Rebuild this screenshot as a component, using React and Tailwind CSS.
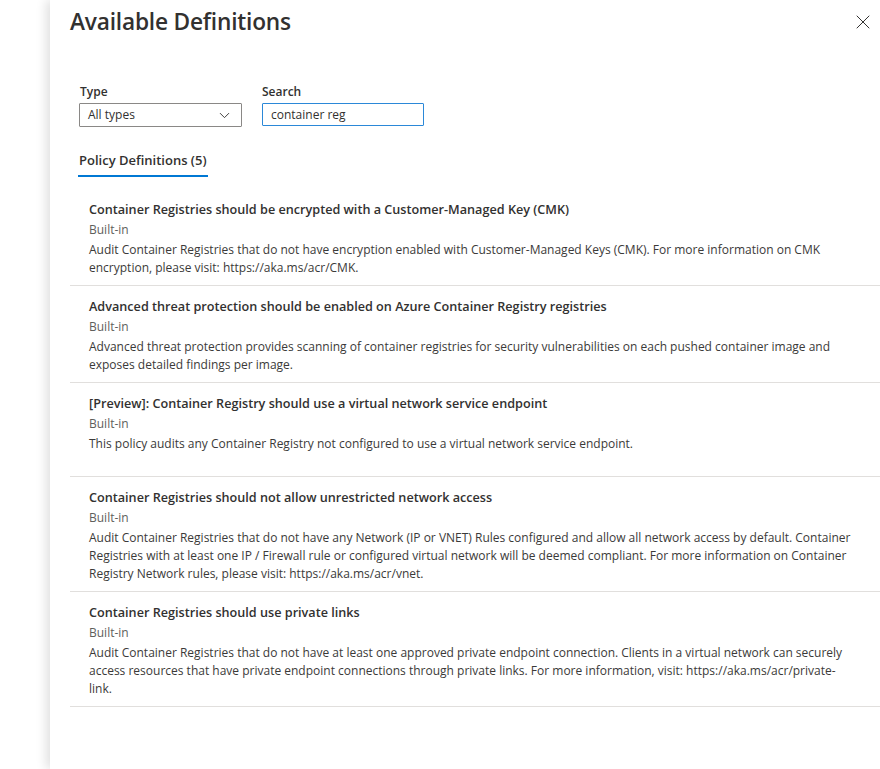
import { ChevronDown, X } from 'lucide-react'

const policies = [
  {
    title: 'Container Registries should be encrypted with a Customer-Managed Key (CMK)',
    desc: 'Audit Container Registries that do not have encryption enabled with Customer-Managed Keys (CMK). For more information on CMK encryption, please visit: https://aka.ms/acr/CMK.',
  },
  {
    title: 'Advanced threat protection should be enabled on Azure Container Registry registries',
    desc: 'Advanced threat protection provides scanning of container registries for security vulnerabilities on each pushed container image and exposes detailed findings per image.',
  },
  {
    title: '[Preview]: Container Registry should use a virtual network service endpoint',
    desc: 'This policy audits any Container Registry not configured to use a virtual network service endpoint.',
  },
  {
    title: 'Container Registries should not allow unrestricted network access',
    desc: 'Audit Container Registries that do not have any Network (IP or VNET) Rules configured and allow all network access by default. Container Registries with at least one IP / Firewall rule or configured virtual network will be deemed compliant. For more information on Container Registry Network rules, please visit: https://aka.ms/acr/vnet.',
  },
  {
    title: 'Container Registries should use private links',
    desc: (
      <>
        Audit Container Registries that do not have at least one approved private endpoint connection. Clients in a virtual network can securely access resources that have private endpoint connections through private links. For more information, visit: https://aka.ms/acr/private-
        <br />
        link.
      </>
    ),
  },
]

export default function App() {
  return (
    <div className="h-[769px] w-[880px] overflow-hidden bg-white flex text-[#323130] font-['Open_Sans',sans-serif]">
      <div className="w-[50px] shrink-0 bg-white" />
      <div className="flex-1 min-w-0 bg-white shadow-[-4px_0_10px_rgba(0,0,0,0.12)] pl-5">
        {/* Header */}
        <div className="flex items-start justify-between pt-[6px] pr-[5px]">
          <h1 className="text-[22.7px] font-semibold leading-[32px] tracking-[-0.2px]">Available Definitions</h1>
          <button className="mt-[4px] text-[#323130]">
            <X size={24} strokeWidth={1} />
          </button>
        </div>

        {/* Filters */}
        <div className="flex gap-[20px] pl-[9px] mt-[46px]">
          <div className="flex flex-col">
            <label className="text-[12px] font-semibold leading-[16px] mb-[3px] pl-[1px]">Type</label>
            <div className="w-[163px] h-[24px] border border-[#8a8886] rounded-[1px] flex items-center justify-between pl-[8px] pr-[8px] text-[12px]">
              <span>All types</span>
              <ChevronDown size={17} strokeWidth={1.3} />
            </div>
          </div>
          <div className="flex flex-col">
            <label className="text-[12px] font-semibold leading-[16px] mb-[3px]">Search</label>
            <div className="w-[162px] h-[23px] border border-[#2b88d8] rounded-[1px] flex items-center pl-[8px] text-[12px]">
              container reg
            </div>
          </div>
        </div>

        {/* Tab */}
        <div className="pl-[8px] mt-[20px]">
          <div className="inline-flex flex-col">
            <span className="text-[13px] font-semibold leading-[20px] px-[1px]">Policy Definitions (5)</span>
            <div className="h-[2px] bg-[#0078d4] mt-[5px]" />
          </div>
        </div>

        {/* List */}
        <div className="mt-[12px]">
          {policies.map((p, i) => (
            <div key={i} className="border-b border-[#e1dfdd] pl-[19px] pr-[8px] pt-[10px] pb-[8px] min-h-[94px]">
              <div className="text-[12.65px] font-semibold leading-[20px]">{p.title}</div>
              <div className="text-[12px] text-[#605e5c] leading-[22px]">Built-in</div>
              <div className="text-[12px] leading-[18px] text-[#3b3a39]">{p.desc}</div>
            </div>
          ))}
        </div>
      </div>
    </div>
  )
}
